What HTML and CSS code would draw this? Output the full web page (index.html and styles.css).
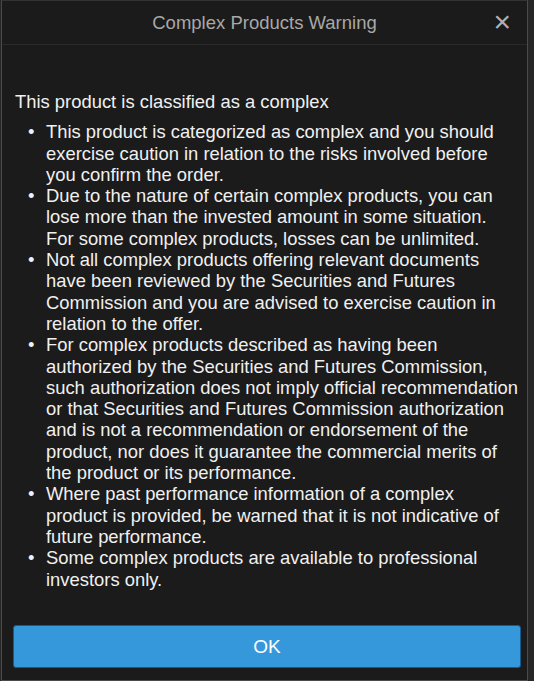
FILE: index.html
```html
<!DOCTYPE html>
<html lang="en">
<head>
  <meta charset="UTF-8">
  <meta name="viewport" content="width=device-width, initial-scale=1.0">
  <title>Complex Products Warning</title>
  <link rel="stylesheet" href="styles.css">
</head>
<body>
  <div class="dialog">
    <div class="dialog-header">
      <h2 class="dialog-title">Complex Products Warning</h2>
      <span class="close-btn">&times;</span>
    </div>
    <div class="dialog-body">
      <p class="lead">This product is classified as a complex</p>
      <ul class="warning-list">
        <li>This product is categorized as complex and you should exercise caution in relation to the risks involved before you confirm the order.</li>
        <li>Due to the nature of certain complex products, you can lose more than the invested amount in some situation. For some complex products, losses can be unlimited.</li>
        <li>Not all complex products offering relevant documents have been reviewed by the Securities and Futures Commission and you are advised to exercise caution in relation to the offer.</li>
        <li>For complex products described as having been authorized by the Securities and Futures Commission, such authorization does not imply official recommendation or that Securities and Futures Commission authorization and is not a recommendation or endorsement of the product, nor does it guarantee the commercial merits of the product or its performance.</li>
        <li>Where past performance information of a complex product is provided, be warned that it is not indicative of future performance.</li>
        <li>Some complex products are available to professional investors only.</li>
      </ul>
    </div>
    <div class="dialog-footer">
      <button class="ok-btn">OK</button>
    </div>
  </div>
</body>
</html>
```

FILE: styles.css
```css
body {
  margin: 0;
  padding: 0;
  background-color: #262626;
  font-family: "Liberation Sans", Arial, sans-serif;
  color: #f0f0f0;
}
.dialog {
  box-sizing: border-box;
  width: 527px;
  height: 681px;
  margin-left: 1px;
  background-color: #1b1b1b;
  border: 1px solid #4a4a4a;
  border-top-color: #333;
  display: flex;
  flex-direction: column;
}
.dialog-header {
  height: 43px;
  display: flex;
  align-items: center;
  justify-content: center;
  position: relative;
  border-bottom: 1px solid #2a2a2a;
}
.dialog-title {
  margin: 0;
  font-size: 18.5px;
  font-weight: normal;
  color: #a8a8a8;
}
.close-btn {
  position: absolute;
  right: 16px;
  top: 7px;
  font-size: 30px;
  line-height: 28px;
  color: #b0b0b0;
  cursor: pointer;
}
.dialog-body {
  flex: 1;
  padding: 46px 9px 0 13px;
  font-size: 18.4px;
  line-height: 21.3px;
}
.lead {
  margin: 0 0 9px 0;
}
.warning-list {
  margin: 0;
  padding-left: 31px;
  list-style: none;
}
.warning-list li::before {
  content: "\2022";
  display: inline-block;
  width: 18px;
  margin-left: -18px;
}
.dialog-footer {
  padding: 0 6px 12px 11px;
}
.ok-btn {
  width: 100%;
  height: 43px;
  border: 1px solid #1a5a8a;
  border-radius: 3px;
  background-color: #3498db;
  color: #ffffff;
  font-family: "Liberation Sans", Arial, sans-serif;
  font-size: 19px;
  cursor: pointer;
}
```
